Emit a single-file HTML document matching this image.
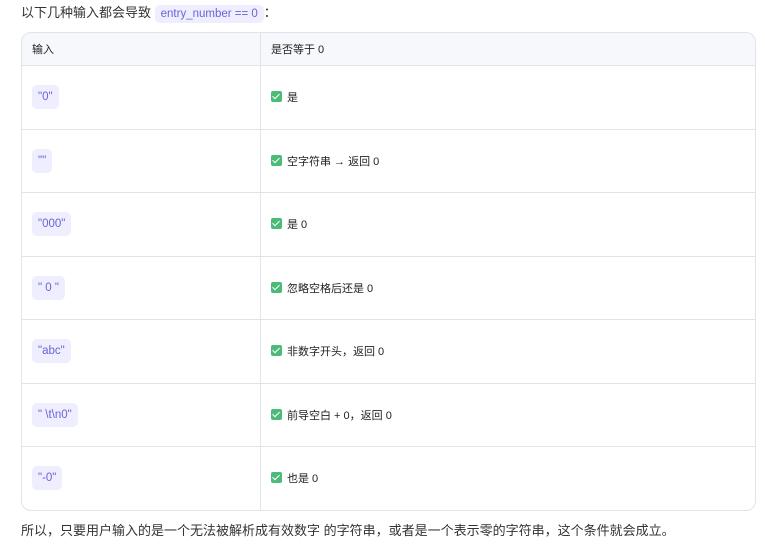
<!DOCTYPE html>
<html><head><meta charset="utf-8"><style>
body{margin:0;background:#fff;font-family:"Liberation Sans","Noto Sans CJK SC",sans-serif;color:#222;width:765px;height:554px;overflow:hidden;position:relative}
.p{position:absolute;left:21px;font-size:13px;color:#333}
code{font-family:"Liberation Sans",sans-serif;background:#efeefe;color:#6a63d8;border-radius:5px;padding:3px 6px;font-size:11.5px}
table{position:absolute;left:21px;top:32px;width:735px;border-collapse:separate;border-spacing:0;border:1px solid #e1e3ea;border-radius:10px;overflow:hidden;font-size:11px}
th{background:#f7f8fb;font-weight:normal;text-align:left;height:32px;padding:0 10px;border-bottom:1px solid #e1e3ea}
td{height:62.5px;padding:0 10px;border-bottom:1px solid #e1e3ea}
tr:last-child td{border-bottom:none}
th:first-child,td:first-child{border-right:1px solid #e1e3ea;width:218px}
td code{font-size:11.5px;padding:6px 6px}
.ck{display:inline-block;width:11px;height:11px;background:#4cbb7a;border-radius:2px;vertical-align:-1px;margin-right:5px;position:relative}
.ck:after{content:"";position:absolute;left:3px;top:1px;width:3px;height:6px;border:solid #fff;border-width:0 1.5px 1.5px 0;transform:rotate(45deg)}
</style></head><body>
<div class="p" style="top:2px">以下几种输入都会导致 <code>entry_number == 0</code>：</div>
<table>
<tr><th>输入</th><th>是否等于 0</th></tr>
<tr><td><code>"0"</code></td><td><span class="ck"></span>是</td></tr>
<tr><td><code>""</code></td><td><span class="ck"></span>空字符串 → 返回 0</td></tr>
<tr><td><code>"000"</code></td><td><span class="ck"></span>是 0</td></tr>
<tr><td><code>" 0 "</code></td><td><span class="ck"></span>忽略空格后还是 0</td></tr>
<tr><td><code>"abc"</code></td><td><span class="ck"></span>非数字开头，返回 0</td></tr>
<tr><td><code>" \t\n0"</code></td><td><span class="ck"></span>前导空白 + 0，返回 0</td></tr>
<tr><td><code>"-0"</code></td><td><span class="ck"></span>也是 0</td></tr>
</table>
<div class="p" style="top:520px">所以，只要用户输入的是一个无法被解析成有效数字 的字符串，或者是一个表示零的字符串，这个条件就会成立。</div>
</body></html>
